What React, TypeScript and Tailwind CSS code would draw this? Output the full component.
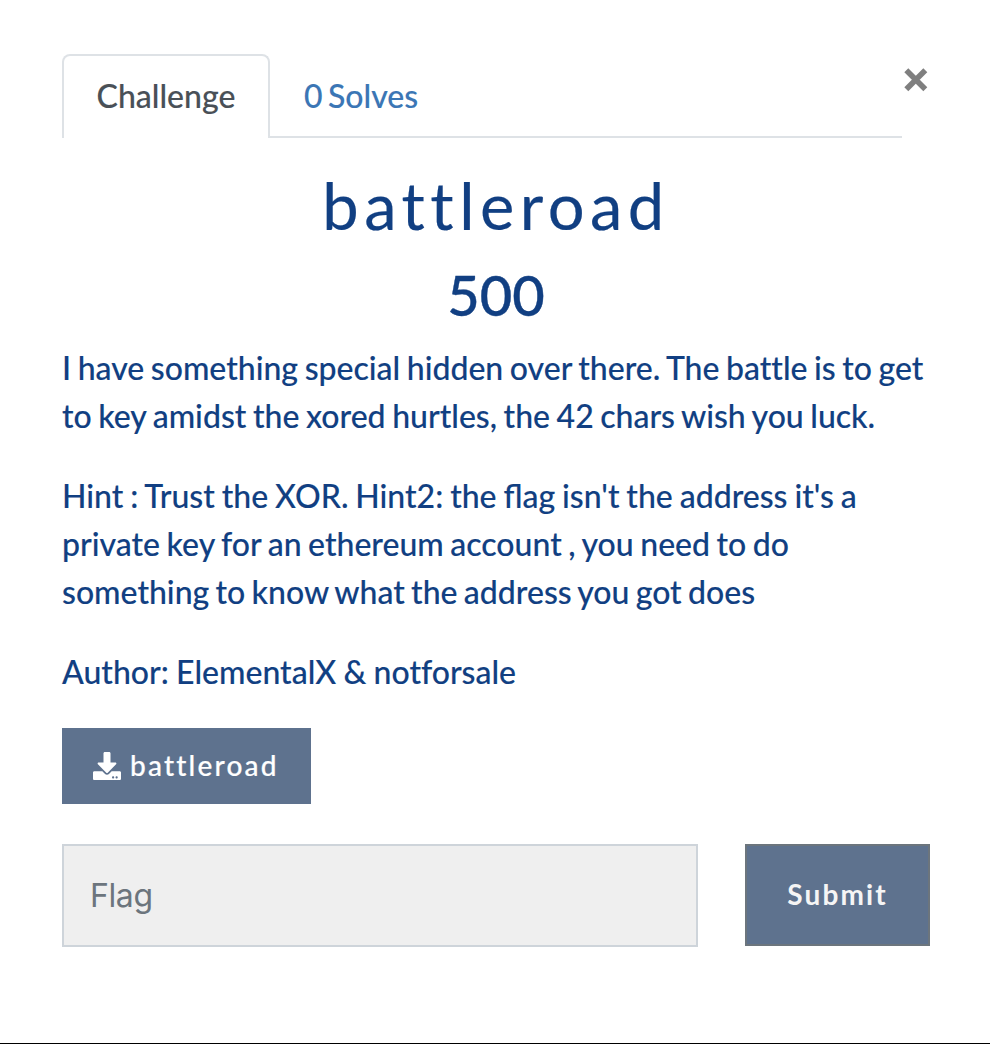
import React from "react";
import { FaDownload } from "react-icons/fa";

export default function App() {
  return (
    <main className="h-[1044px] w-[990px] overflow-hidden border-b border-black bg-white pr-[60px] pl-[62px] pt-[54px] font-['Lato',sans-serif] font-medium text-[#113f82]">
      <div className="flex h-[84px] items-start">
        <nav className="flex h-[84px] w-[840px] shrink-0 text-[32px] leading-[48px] [-webkit-text-stroke:0.12px_currentColor]">
          <button className="h-[84px] w-[208px] rounded-t-[8px] border-2 border-b-0 border-[#dee2e6] pb-[2px] text-[#495057]">Challenge</button>
          <button className="flex-1 border-b-2 border-[#dee2e6] pl-[34px] pt-[2px] text-left text-[#3b76b5] [word-spacing:-2.6px]">0 Solves</button>
        </nav>
        <button aria-label="Close" className="mt-[14px] ml-[2px] text-[#7f7f7f]">
          <svg width="24" height="24" viewBox="0 0 24 24" stroke="currentColor" strokeWidth="5.6"><path d="M2.3 2.3 21.3 21.3M21.3 2.3 2.3 21.3" /></svg>
        </button>
      </div>
      <h1 className="mt-[29px] text-center text-[65px] leading-[77px] font-normal tracking-[5.5px] [-webkit-text-stroke:0.2px_currentColor]">battleroad</h1>
      <h2 className="mt-[17px] text-center text-[56px] leading-[67px] [-webkit-text-stroke:0.4px_currentColor]">500</h2>
      <div className="mt-4 flex flex-col gap-8 text-[32px] leading-[48px] whitespace-nowrap [-webkit-text-stroke:0.12px_currentColor] [font-variant-ligatures:none]">
        <p className="[word-spacing:-1.53px]">I have something special hidden over there. The battle is to get<br />to key amidst the xored hurtles, the 42 chars wish you luck.</p>
        <p><span className="[word-spacing:-1.2px]">Hint : Trust the XOR. Hint2: the <span className="[font-variant-ligatures:normal]">flag</span> isn't the address it's a</span><br /><span className="[word-spacing:-1.5px]">private key for an ethereum account , you need to do</span><br /><span className="[word-spacing:-1.75px]">something to know what the address you got does</span></p>
        <p className="[word-spacing:-0.8px]">Author: ElementalX &amp; notforsale</p>
      </div>
      <button className="mt-8 flex h-[76px] w-[249px] items-center gap-[9px] bg-[#5e728e] pl-[31px] text-[28px] tracking-[2.2px] text-white [-webkit-text-stroke:0.2px_currentColor]"><FaDownload className="[-webkit-text-stroke:0]" /><span className="pb-[2px]">battleroad</span></button>
      <div className="mt-10 flex justify-between">
        <input placeholder="Flag" className="h-[103px] w-[636px] border-2 border-[#ced4da] bg-[#efefef] px-[26px] font-['Inter',sans-serif] text-[32px] font-normal tracking-[-0.4px] placeholder:text-[#6c757d]" />
        <button className="h-[102px] w-[185px] border-2 border-[#6c757d] bg-[#5e728e] pb-[2px] text-[28px] font-bold tracking-[2.1px] text-[#f5f5f5]">Submit</button>
      </div>
    </main>
  );
}
